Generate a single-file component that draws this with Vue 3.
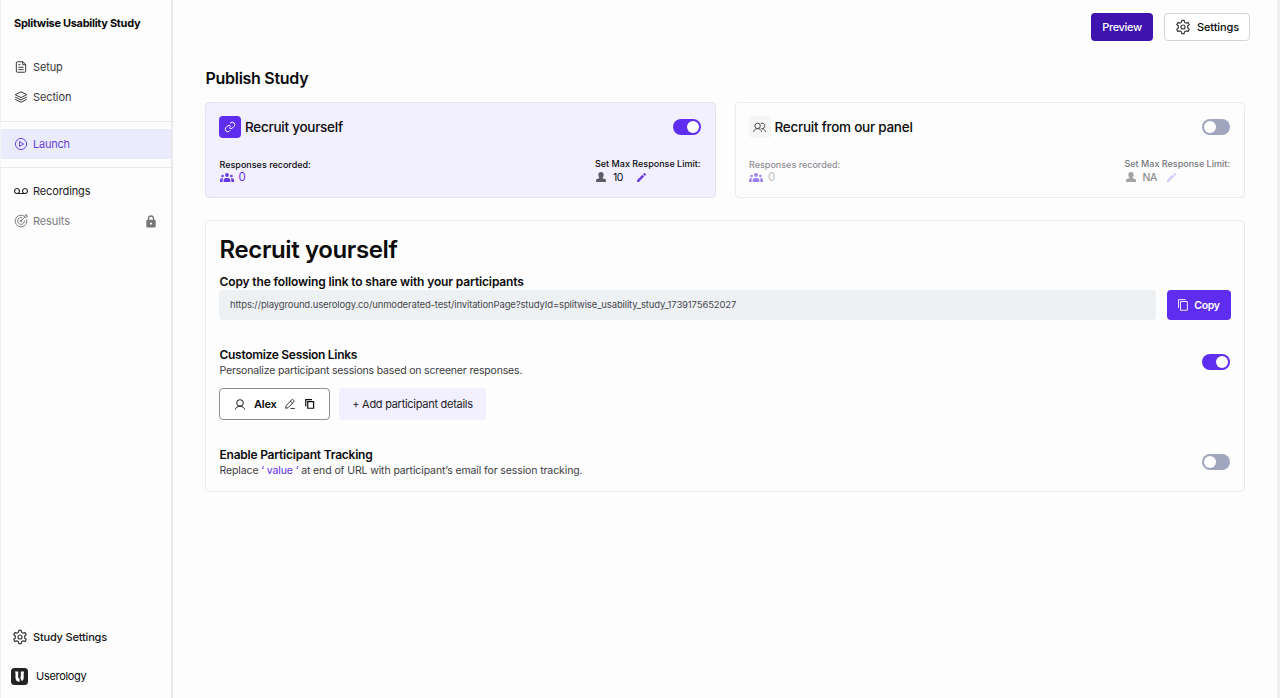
<template>
  <div class="app">
    <aside class="sidebar">
      <div class="study">Splitwise Usability Study</div>
      <nav class="group">
        <a class="item"><svg class="ico" viewBox="0 0 24 24"><path d="M15.500 3H6a2 2 0 0 0-2 2v14a2 2 0 0 0 2 2h12a2 2 0 0 0 2-2V7.500zM15 3v5h5M7.500 8h3.500M7.500 12.500h9M7.500 16.500h9" /></svg><span>Setup</span></a>
        <a class="item"><svg class="ico" viewBox="0 0 24 24"><path d="M12 3l10 5-10 5L2 8zM2 12l10 5 10-5M2 16l10 5 10-5" /></svg><span>Section</span></a>
      </nav>
      <nav class="group launch">
        <a class="item active"><svg class="ico" viewBox="0 0 24 24"><circle cx="12" cy="12" r="9.500" /><path d="M9.500 7.800v8.400l7-4.200z" /></svg><span>Launch</span></a>
      </nav>
      <nav class="group">
        <a class="item dark"><svg class="ico tape" viewBox="0 0 14 14"><path d="M3 9.500h8M3 4.500a2.500 2.500 0 1 0 .01 0zM11 4.500a2.500 2.500 0 1 0 .01 0z" /></svg><span>Recordings</span></a>
        <a class="item muted"><svg class="ico" viewBox="0 0 24 24"><path d="M17.500 3.700A10 10 0 1 0 21.500 9M14.500 6.700A5.800 5.800 0 1 0 17.800 11M12 12l6-6V3.500L21 1v2.500h2.500L21 6h-3" /><circle cx="12" cy="12" r="1.500" /></svg><span>Results</span>
          <svg class="lock" viewBox="0 0 10 13"><path d="M2.500 6V3.500a2.500 2.500 0 0 1 5 0V6" fill="none" stroke="#777" stroke-width="1.300" /><rect x="0.300" y="4.800" width="9.400" height="7.700" rx="1.200" fill="#777" /><circle cx="5" cy="8.600" r="1.100" fill="#fff" /></svg></a>
      </nav>
      <div class="bottom">
        <a class="item study-settings"><svg class="gear" viewBox="0 0 24 24"><path d="M10.300 2h3.400l.8 3.100 2 1.150 3.100-.9 1.700 2.950-2.300 2.250v2.900l2.300 2.250-1.700 2.950-3.100-.9-2 1.150-.8 3.100h-3.400l-.8-3.100-2-1.150-3.100.9-1.700-2.950L5 13.450v-2.900L2.700 8.300l1.700-2.950 3.100.9 2-1.150z" /><circle cx="12" cy="12" r="3" /></svg><span>Study Settings</span></a>
        <a class="brand"><svg viewBox="0 0 17 17"><rect width="17" height="17" rx="3.500" fill="#222" /><path d="M3.800 3.500h3.400v5.600c0 1 .6 1.500 1.400 1.500V13.700C5.800 13.700 4.500 12 4.500 9.400V5zM9.800 3.500h3.400L12.700 5v4.400c0 1.800-.6 3-1.900 3.700L9.200 9.800l.6-.8z" fill="#fff" /></svg><span>Userology</span></a>
      </div>
    </aside>

    <section class="content">
      <header class="topbar">
        <button class="btn preview">Preview</button>
        <button class="btn settings"><svg class="gear" viewBox="0 0 24 24"><path d="M10.300 2h3.400l.8 3.100 2 1.150 3.100-.9 1.700 2.950-2.300 2.250v2.900l2.300 2.250-1.700 2.950-3.100-.9-2 1.150-.8 3.100h-3.400l-.8-3.100-2-1.150-3.100.9-1.700-2.950L5 13.450v-2.900L2.700 8.300l1.700-2.950 3.100.9 2-1.150z" /><circle cx="12" cy="12" r="3" /></svg><span>Settings</span></button>
      </header>
      <main>
        <h2>Publish Study</h2>
        <div class="cards">
          <article v-for="card in cards" :key="card.title" class="card" :class="card.kind">
            <div class="card-top">
              <i class="tile">
                <svg v-if="card.on" viewBox="0 0 24 24"><path d="M10 13a5 5 0 0 0 7.500.5l3-3a5 5 0 0 0-7-7l-1.700 1.700M14 11a5 5 0 0 0-7.500-.5l-3 3a5 5 0 0 0 7 7l1.700-1.700" /></svg>
                <svg v-else viewBox="0 0 24 24"><circle cx="8.500" cy="9" r="5" /><path d="M1 20c.8-3.600 3.500-6 7.500-6s6.700 2.400 7.500 6M14.500 4.500A5 5 0 1 1 16 13.900c3.800 0 6.200 2.400 7 6.100" /></svg>
              </i>
              <h3>{{ card.title }}</h3><i class="toggle" :class="{ on: card.on }"></i>
            </div>
            <div class="stats">
              <div class="recorded"><b>Responses recorded:</b>
                <p><svg class="people" viewBox="0 0 14 9"><circle cx="7" cy="2" r="1.900" /><circle cx="2.600" cy="3" r="1.300" /><circle cx="11.400" cy="3" r="1.300" /><path d="M3.600 9V7.200C3.600 5.600 5 5 7 5s3.400.6 3.400 2.200V9zM0 9V7c0-1.200 1.200-1.800 3.200-1.700C2.600 6.200 2.600 7 2.600 9zM14 9V7c0-1.200-1.200-1.800-3.200-1.700.6.900.6 1.700.6 3.700z" /></svg><span>0</span></p></div>
              <div class="limit"><b>Set Max Response Limit:</b>
                <p><svg class="person" viewBox="0 0 10 10"><path d="M5 0C3.300 0 2.300 1.200 2.300 2.800c0 1.500.7 2.600 1.400 3.200L.9 7.100C.3 7.400 0 8 0 10h10c0-2-.3-2.600-.9-2.900L6.300 6c.7-.6 1.400-1.700 1.400-3.200C7.700 1.200 6.700 0 5 0z" /></svg><span class="num">{{ card.limit }}</span><svg class="pen" viewBox="0 0 10 10"><path d="M0 10V8l6-6 2 2-6 6zM6.700 1.300 7.900.2c.3-.3.700-.3 1 0l.9.900c.3.300.3.700 0 1L8.700 3.300z" /></svg></p></div>
            </div>
          </article>
        </div>

        <section class="details">
          <h1>Recruit yourself</h1>
          <h4 class="copy-label">Copy the following link to share with your participants</h4>
          <div class="link-row">
            <div class="url">https://playground.userology.co/unmoderated-test/invitationPage?studyId=splitwise_usability_study_1739175652027</div>
            <button class="copy"><svg viewBox="0 0 11 13"><path d="M8.300.6H.6V9.700M2.800 2.700h7.500v9.600H2.800z" /></svg><span>Copy</span></button>
          </div>
          <div class="option customize">
            <div><h4>Customize Session Links</h4><p>Personalize participant sessions based on screener responses.</p></div>
            <i class="toggle on"></i>
          </div>
          <div class="people-row">
            <div class="alex"><svg class="user" viewBox="0 0 10 11"><circle cx="5" cy="4" r="3.300" /><path d="M.4 10.600C.7 8.600 2.300 7.300 5 7.300s4.300 1.300 4.600 3.300" /></svg><b>Alex</b><svg class="edit" viewBox="0 0 11 11"><path d="M.7 10.200l.5-2.700L7.300.9c.5-.5 1.200-.5 1.700 0l.6.600c.5.500.5 1.200 0 1.700L3.300 9.700zM6 2.400l2.200 2.200M6 10.400h4.800" /></svg><svg class="dup" viewBox="0 0 11 11"><path d="M7.800.7H.8V8M3 2.900h6.500v7.300H3z" /></svg></div>
            <button class="add">+ Add participant details</button>
          </div>
          <div class="option tracking">
            <div><h4>Enable Participant Tracking</h4><p>Replace <em>‘ value ‘</em> at end of URL with participant’s email for session tracking.</p></div>
            <i class="toggle"></i>
          </div>
        </section>
      </main>
    </section>
    <div class="scroll"></div>
  </div>
</template>

<script setup>
const cards = [
  { title: 'Recruit yourself', kind: 'selected', on: true, limit: '10' },
  { title: 'Recruit from our panel', kind: 'panel', on: false, limit: 'NA' },
]
</script>

<style>
body { margin: 0; }
</style>
<style scoped>
* { box-sizing: border-box; }
h1, h2, h3, h4, p { margin: 0; font-weight: 600; }
button { font: inherit; padding: 0; border: 0; }
svg { fill: none; stroke: currentColor; stroke-width: 1.5; flex: none; overflow: visible; }
.app { display: flex; width: 1280px; height: 698px; overflow: hidden; background: #fdfdfd; color: #0b0b0c; font: 11px/14px Inter, "Liberation Sans", sans-serif; white-space: nowrap; }
.sidebar { width: 173px; border-right: 2px solid #e9e9ea; border-left: 1px solid #f3f3f3; display: flex; flex-direction: column; flex: none; }
.study { height: 44px; padding: 16px 0 0 13px; font-weight: 700; margin-bottom: 8px; letter-spacing: -0.3px; }
.group { display: flex; flex-direction: column; }
.item { height: 30px; display: flex; align-items: center; padding-left: 13px; gap: 5px; color: #38383c; font-weight: 400; letter-spacing: -0.12px; }
.ico { width: 14px; height: 14px; stroke-width: 1.7; }
.tape { stroke-width: 1.15; }
.launch { margin: 9px 0 8px; padding: 7px 0 8px; border: solid #e9e9ea; border-width: 1px 0; }
.active { background: #eaecfb; color: #6a3fe0; letter-spacing: -0.22px; }
.dark { color: #222; }
.muted { color: #7c7c80; }
.lock { width: 10px; height: 13px; margin-left: auto; margin-right: 15px; stroke: none; }
.bottom { margin-top: auto; height: 76px; }
.gear { width: 16px; height: 16px; color: #3a3a3e; stroke-width: 1.8; }
.study-settings { padding-left: 11px; color: #151515; font-weight: 500; letter-spacing: -0.18px; }
.brand { display: flex; align-items: center; gap: 8px; height: 30px; margin-top: 9px; padding-left: 10px; letter-spacing: -0.3px; }
.brand svg { width: 17px; height: 17px; stroke: none; }
.content { flex: 1; min-width: 0; }
.topbar { height: 55px; padding: 13px 27px 0 0; display: flex; justify-content: flex-end; gap: 11px; border-bottom: 1px solid #fafafa; }
.btn { height: 28px; border-radius: 4px; display: flex; align-items: center; justify-content: center; font-weight: 500; }
.preview { width: 62px; background: #3e13ae; color: #fff; letter-spacing: -0.35px; }
.settings { width: 86px; background: #fff; border: 1px solid #d4d4d7; gap: 6px; color: #0b0b0c; letter-spacing: -0.12px; }
main { padding: 13px 32px 0; }
h2 { font-size: 16px; line-height: 20px; margin-bottom: 14px; letter-spacing: -0.28px; padding-left: 0.5px; }
.cards { display: grid; grid-template-columns: 1fr 1fr; gap: 19px; }
.card { height: 96px; border: 1px solid #ebebee; border-radius: 4px; padding: 13px 14px 0 13px; }
.selected { background: #f2effe; border-color: #e6e2f3; }
.card-top { display: flex; align-items: center; height: 22px; }
.tile { width: 22px; height: 22px; border-radius: 4px; background: #5f2df0; color: #fff; display: grid; place-items: center; margin-right: 4px; }
.tile svg { width: 12px; height: 12px; stroke-width: 2; }
.panel .tile { background: #f5f5f6; color: #444; }
.panel .tile svg { width: 13px; height: 13px; stroke-width: 1.8; }
h3 { font-size: 13.5px; font-weight: 500; letter-spacing: -0.26px; }
.toggle { width: 28px; height: 16px; border-radius: 8px; background: #a0a6bd; padding: 2px; margin-left: auto; display: flex; flex: none; }
.toggle::before { content: ''; width: 12px; height: 12px; border-radius: 50%; background: #fff; }
.toggle.on { background: #5f2df0; justify-content: flex-end; }
.stats { display: flex; justify-content: space-between; margin-top: 19px; font-size: 9px; line-height: 13px; }
.stats b { font-weight: 500; display: block; }
.stats p { display: flex; align-items: center; height: 13px; font-weight: 400; }
.recorded { padding: 1px 0 0 0.5px; }
.people { width: 14px; height: 9px; fill: #6739e8; stroke: none; }
.recorded p { gap: 5px; font-size: 11.5px; color: #6739e8; }
.person { width: 10px; height: 10px; fill: #5c5c64; stroke: none; }
.limit p { padding-left: 1px; font-size: 10.5px; height: 14px; letter-spacing: -0.4px; }
.num { width: 24px; margin-left: 7px; }
.pen { width: 9px; height: 9px; fill: #6a3fe0; stroke: none; }
.panel .stats { color: #8e8e94; }
.panel .people { fill: #9d80ef; }
.panel .recorded p { color: #bdbdc2; }
.panel .limit { color: #77777c; }
.panel .person { fill: #a3a3a6; }
.panel .pen { fill: #d6caf8; }
.details { margin-top: 22px; height: 272px; border: 1px solid #ebebee; border-radius: 4px; padding: 14px 13px 0; }
h1 { font-size: 24px; line-height: 30px; letter-spacing: -0.38px; padding-left: 0.5px; }
.details h4 { font-size: 12px; line-height: 16px; padding-left: 0.5px; }
.details .copy-label { padding-top: 9px; letter-spacing: -0.13px; }
.link-row { display: flex; gap: 11px; }
.url { flex: 1; height: 30px; border-radius: 4px; background: #eef1f4; padding: 8px 11px; font-size: 9.5px; color: #48484d; letter-spacing: -0.135px; }
.copy { width: 64px; height: 30px; border-radius: 4px; background: #5f2df0; color: #fff; display: flex; align-items: center; justify-content: center; gap: 6px; font-size: 10.5px; line-height: 15px; font-weight: 600; letter-spacing: -0.35px; }
.copy svg { width: 10px; height: 12px; stroke-width: 1; }
.option { display: flex; align-items: center; height: 33px; }
.option .toggle { position: relative; top: -1px; margin-right: 1px; }
.option h4 { padding-top: 1px; }
.customize { margin-top: 26px; }
.customize h4 { letter-spacing: -0.3px; }
.option p { font-size: 10.5px; line-height: 16px; font-weight: 400; color: #3c3c41; letter-spacing: -0.17px; padding-left: 0.5px; }
.option em { font-style: normal; color: #5f2df0; }
.people-row { display: flex; gap: 9px; margin-top: 9px; height: 32px; }
.alex { width: 111px; border: 1px solid #8d8d92; border-radius: 4px; display: flex; align-items: center; padding-left: 15px; background: #fff; }
.alex b { font-weight: 600; margin: 0 9px; letter-spacing: -0.25px; }
.user { width: 10px; height: 11px; stroke-width: 0.9; }
.edit, .dup { width: 10px; height: 10px; stroke-width: 0.9; }
.dup { margin-left: 10px; stroke-width: 1.3; }
.add { width: 147px; background: #f2effe; border-radius: 4px; color: #222228; letter-spacing: -0.28px; }
.tracking { margin-top: 26px; }
.tracking h4 { letter-spacing: -0.22px; }
.tracking p { letter-spacing: -0.11px; }
.scroll { width: 3px; background: #f0f0f1; flex: none; }
</style>
